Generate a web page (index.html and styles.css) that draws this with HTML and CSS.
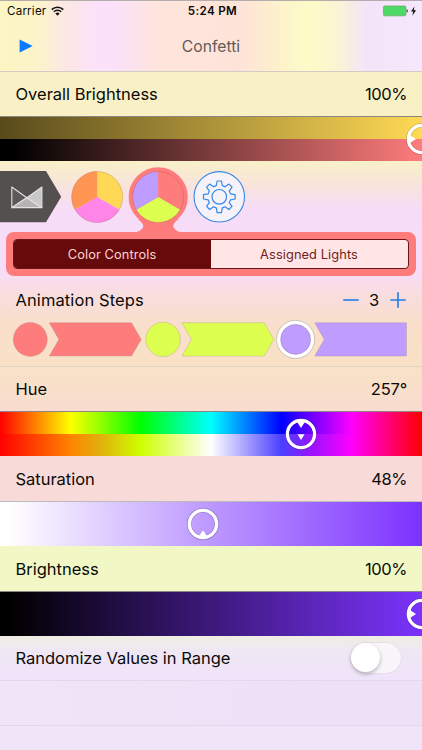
FILE: index.html
```html
<!DOCTYPE html>
<html lang="en">
<head>
<meta charset="utf-8">
<title>Confetti</title>
<link rel="stylesheet" href="styles.css">
</head>
<body>
<header class="header">
  <div class="status">
    <div class="carrier">Carrier
      <svg width="13" height="10" viewBox="0 0 13 10"><g fill="none" stroke="#111" stroke-width="1.6"><path d="M.7 3.6a8.2 8.2 0 0 1 11.6 0"/><path d="M2.8 5.8a5.2 5.2 0 0 1 7.4 0"/></g><path d="M6.5 9.8 4.4 7.6a3 3 0 0 1 4.2 0z" fill="#111"/></svg>
    </div>
    <div class="clock">5:24 PM</div>
    <div class="power">
      <svg width="39" height="12" viewBox="0 0 39 12"><rect x=".4" y="1" width="22.5" height="9.800" rx="1.3" fill="#4cd964" stroke="#75a86c" stroke-width=".8"/><path d="M23.600 4.200c1.600.2 1.600 3.200 0 3.400z" fill="#333"/><path d="M31.600 1.200 28 6.600h2.300l-1 4.200 3.800-5.500h-2.400z" fill="#111"/></svg>
    </div>
  </div>
  <div class="nav">
    <svg class="play" width="14" height="14" viewBox="0 0 14 14"><path d="M.6.4 13.6 6.9.6 13.4z" fill="#0a7aff"/></svg>
    <h1 class="title">Confetti</h1>
  </div>
</header>

<section class="row row-overall"><span class="label">Overall Brightness</span><span class="value">100%</span></section>
<div class="slider split">
  <div class="band band-yellow"></div>
  <div class="band band-coral"></div>
  <svg class="thumb thumb-end" width="34" height="34" viewBox="-17 -17 34 34"><circle r="13.700" fill="none" stroke="#0003" stroke-width="4.600"/><circle r="13.600" fill="none" stroke="#fff" stroke-width="3.400"/><path d="M-12.500-4.200-6 0l-6.500 4.200z" fill="#fff"/></svg>
</div>

<section class="scene">
  <svg class="groups" width="422" height="71" viewBox="0 161 422 71">
    <path d="M0 171h46l15.200 25.800L46 222.200H0z" fill="#545050"/>
    <g stroke="#e2e2e2" stroke-width="1.100" stroke-linejoin="round"><path d="M11.800 187v20.600l15-9.800z" fill="#5c5959"/><path d="M11.800 207.600h30.100L26.800 197.800z" fill="#b5b3b3"/><path d="M41.900 187v20.600l-15.100-9.800z" fill="#c9c8c8"/></g>
    <g transform="translate(97.200 197)"><path d="M0 0V-25.700A25.700 25.700 0 0 1 22.260 12.850z" fill="#ffd955"/><path d="M0 0 22.260 12.850A25.700 25.700 0 0 1-22.260 12.850z" fill="#ff85e9"/><path d="M0 0-22.260 12.850A25.700 25.700 0 0 1 0-25.700z" fill="#ff9453"/><circle r="25.400" fill="none" stroke="#a77" stroke-opacity=".4" stroke-width=".8"/></g>
    <path d="M138 219C144 224 144.500 227 141.500 229.200 139.500 231 137.500 232 134 232.500H182.400C179 232 177 231 175 229.200 172 227 172.500 224 178.400 219z" fill="#ff7c7c"/>
    <circle cx="158.200" cy="196.900" r="29.600" fill="#ff7c7c"/>
    <g transform="translate(158.200 197)"><path d="M0 0V-25.400A25.400 25.400 0 0 1 22 12.700z" fill="#ff7c7c"/><path d="M0 0 22 12.700A25.400 25.400 0 0 1-22 12.700z" fill="#ddff50"/><path d="M0 0-22 12.700A25.400 25.400 0 0 1 0-25.400z" fill="#bf9cff"/><circle r="25.500" fill="none" stroke="#b95050" stroke-opacity=".45" stroke-width=".8"/></g>
    <g transform="translate(219.300 196.800)" stroke="#3889e5" fill="none"><circle r="25.200" fill="#f5f2fa" stroke-width="1.100"/><circle r="7.300" stroke-width="1.200"/><path stroke-width="1.200" stroke-linejoin="round" d="M-3-11.100-2.200-15.800H2.200L3-11.100A11.500 11.500 0 0 1 5.730-9.970L9.620-12.730 12.730-9.620 9.970-5.730A11.500 11.500 0 0 1 11.100-3L15.800-2.200V2.200L11.100 3A11.500 11.500 0 0 1 9.970 5.730L12.730 9.620 9.620 12.730 5.730 9.970A11.500 11.500 0 0 1 3 11.100L2.200 15.800H-2.200L-3 11.100A11.500 11.500 0 0 1-5.730 9.970L-9.620 12.730-12.730 9.620-9.970 5.730A11.500 11.500 0 0 1-11.100 3L-15.800 2.200V-2.200L-11.100-3A11.500 11.500 0 0 1-9.970-5.730L-12.730-9.620-9.620-12.730-5.730-9.970A11.500 11.500 0 0 1-3-11.100z"/></g>
  </svg>
  <div class="panel">
    <div class="segments"><span class="seg active">Color Controls</span><span class="seg">Assigned Lights</span></div>
  </div>
  <div class="steps-head">
    <span class="label">Animation Steps</span>
    <div class="stepper">
      <svg width="16" height="16" viewBox="0 0 16 16"><path d="M.3 8h15.400" stroke="#217be8" stroke-width="1.600"/></svg>
      <span class="count">3</span>
      <svg width="16" height="16" viewBox="0 0 16 16"><path d="M.3 8h15.400M8 .3v15.400" stroke="#217be8" stroke-width="1.600"/></svg>
    </div>
  </div>
  <svg class="steps" width="422" height="46" viewBox="0 318 422 46">
    <g stroke="#a88" stroke-opacity=".4" stroke-width=".8">
      <circle cx="30.300" cy="339.400" r="17" fill="#ff7c7c"/><path d="M49.300 322.700h82.200l9.700 16.700-9.700 16.700H49.300l9.500-16.700z" fill="#ff7c7c"/>
      <circle cx="163" cy="339.400" r="17.200" fill="#ddff50"/><path d="M182 322.700h82.200l9.600 16.700-9.600 16.700H182l9.500-16.700z" fill="#ddff50"/>
      <circle cx="295.600" cy="339.400" r="19" fill="#fff" stroke="#777" stroke-opacity=".45"/><circle cx="295.600" cy="339.400" r="15" fill="#bf9cff" stroke="#765a9a"/>
      <path d="M314.700 322.700h91.800v33.400h-91.800l9.500-16.700z" fill="#bf9cff"/>
    </g>
  </svg>
</section>

<section class="row row-hue"><span class="label">Hue</span><span class="value degrees">257°</span></section>
<div class="slider split">
  <div class="band band-hue"></div>
  <div class="band band-hue-mix"></div>
  <svg class="thumb thumb-hue" width="34" height="34" viewBox="-17 -17 34 34"><circle r="13.700" fill="none" stroke="#0003" stroke-width="4.500"/><circle r="13.600" fill="none" stroke="#fff" stroke-width="3.300"/><path d="M-4.200-12.500 0-6l4.200-6.500zM-3.500.2h7L0 6z" fill="#fff"/></svg>
</div>

<section class="row row-saturation"><span class="label">Saturation</span><span class="value">48%</span></section>
<div class="slider sat">
  <svg class="thumb thumb-sat" width="34" height="34" viewBox="-17 -17 34 34"><circle r="13.700" fill="none" stroke="#0003" stroke-width="4.800"/><circle r="13.600" fill="none" stroke="#fff" stroke-width="3.400"/><path d="M-4.200 12.500 0 6.300l4.200 6.200z" fill="#fff"/></svg>
</div>

<section class="row row-brightness"><span class="label">Brightness</span><span class="value">100%</span></section>
<div class="slider bright">
  <svg class="thumb thumb-end" width="34" height="34" viewBox="-17 -17 34 34"><circle r="13.700" fill="none" stroke="#0003" stroke-width="4.600"/><circle r="13.600" fill="none" stroke="#fff" stroke-width="3.400"/><path d="M-12.500-4.200-6 0l-6.500 4.200z" fill="#fff"/></svg>
</div>

<section class="row row-random"><span class="label">Randomize Values in Range</span><span class="switch"><span class="knob"></span></span></section>
<div class="blank"></div>
<div class="blank last"></div>
</body>
</html>
```
FILE: styles.css
```css
* { box-sizing: border-box; }
body {
  margin: 0;
  width: 422px;
  height: 750px;
  overflow: hidden;
  font-family: Inter, "Liberation Sans", sans-serif;
  font-size: 16.5px;
  color: #0b0a08;
  background: #efe4f8;
}
svg { display: block; flex: none; }

.header {
  height: 72px;
  border-top: 1px solid #b5adab;
  border-bottom: 1px solid #d5cbc5;
  background: linear-gradient(90deg, #fbf6c2 0, #fcf3ca 9%, #fce8e3 15%, #fbe1fb 23%, #fbe1f8 28%, #fee5db 38%, #fee3d9 57%, #fdf0cd 65%, #fdfbc7 73%, #fbf4d3 80%, #f4e4fa 87%, #f6e7fd 100%);
}
.status {
  display: grid;
  grid-template-columns: 1fr auto 1fr;
  align-items: center;
  height: 20px;
  font-size: 11.6px;
}
.carrier { display: flex; gap: 5px; align-items: center; padding-left: 7px; letter-spacing: .2px; }
.clock { font-weight: 600; letter-spacing: .35px; padding-left: 3px; }
.power { display: flex; justify-content: flex-end; }
.nav {
  display: grid;
  grid-template-columns: 1fr auto 1fr;
  align-items: center;
  height: 50px;
}
.play { margin-left: 19px; }
.title { margin: 0; font-size: 15.700px; font-weight: 400; color: #625b58; }

.row {
  display: flex;
  justify-content: space-between;
  align-items: center;
  height: 45px;
  padding: 0 15.5px;
}
.label, .value { line-height: 20px; }
.label { letter-spacing: -.02px; }
.value { letter-spacing: -.4px; margin-right: -.6px; }
.degrees { letter-spacing: -.15px; }
.row-overall { height: 44px; background: #f9f1c5; }
.row-hue { height: 44px; background: linear-gradient(#f9e2c6, #f8dcd0); }
.row-saturation { background: #f8dad8; }
.row-brightness { background: #f1f8c6; }
.row-random {
  height: 45px;
  padding-right: 21.500px;
  border-bottom: 1px solid #e2d8e8;
  background: linear-gradient(#f0eee3, #efe7f4 35%, #efe3fa);
}
.blank { height: 45px; border-bottom: 1px solid #e2d8e8; background: linear-gradient(100deg, #f0e4f8, #eee0f7); }
.last { height: 25px; border: 0; background: #efe4f8; }

.slider {
  position: relative;
  overflow: hidden;
  height: 45px;
  border-top: 1px solid #8d8582;
}
.split { display: grid; grid-template-rows: 1fr 1fr; }
.band-yellow { background: linear-gradient(90deg, #584b1c, #ffd955); }
.band-coral { background: linear-gradient(90deg, #000 3%, #ff7c7c); }
.band-hue { background: linear-gradient(90deg, #f00, #ff0 16.7%, #0f0 33.3%, #0ff 50%, #00f 66.7%, #f0f 83.3%, #f00); }
.band-hue-mix { background: linear-gradient(90deg, #f00, #ff8500 17%, #e0b20b 24%, #ceff00 33.3%, #fff 50%, #4b40ff 66.7%, #9a12ff 74%, #f0f 83.3%, #f00); }
.sat { background: linear-gradient(90deg, #fff 2%, #bf9cff 48%, #7c32ff); border-top-color: #bbb; }
.bright { background: linear-gradient(90deg, #000 2%, #7b33fc); }
.thumb { position: absolute; top: 5px; }
.thumb-end { left: 405px; }
.thumb-hue { left: 284px; }
.thumb-sat { left: 185.500px; }

.scene {
  height: 206px;
  border-bottom: 1px solid #e1d1c6;
  background: linear-gradient(#f9f0c8 0, #f8e3de 13%, #f7dcf8 24%, #f8dcf8 54%, #f8dddf 65%, #f9dfca 80%, #f9e1c7 100%);
}
.panel {
  width: 410px;
  height: 44px;
  margin-left: 5.500px;
  padding: 7px;
  border-radius: 8px;
  background: #ff7c7c;
}
.segments {
  display: grid;
  grid-template-columns: 1fr 1fr;
  height: 30px;
  overflow: hidden;
  border: 1px solid #6a1518;
  border-radius: 4px;
  background: #ffe5e6;
}
.seg {
  display: grid;
  place-items: center;
  font-size: 12.8px;
  letter-spacing: .1px;
  color: #721c20;
}
.seg.active { background: #670a0c; color: #ffd3d3; }
.steps-head {
  display: flex;
  justify-content: space-between;
  align-items: center;
  height: 42px;
  padding: 6px 16.500px 0 15.5px;
}
.steps-head .label { letter-spacing: .1px; }
.stepper { display: flex; align-items: center; gap: 10px; }
.count { width: 11px; text-align: center; }

.switch {
  width: 50px;
  height: 30px;
  border-radius: 15px;
  background: #f8f6fa;
  box-shadow: 0 0 0 .5px #ded8e3;
}
.knob {
  display: block;
  width: 29px;
  height: 29px;
  border-radius: 50%;
  background: #fff;
  box-shadow: 0 2px 4px #0004;
}
```
